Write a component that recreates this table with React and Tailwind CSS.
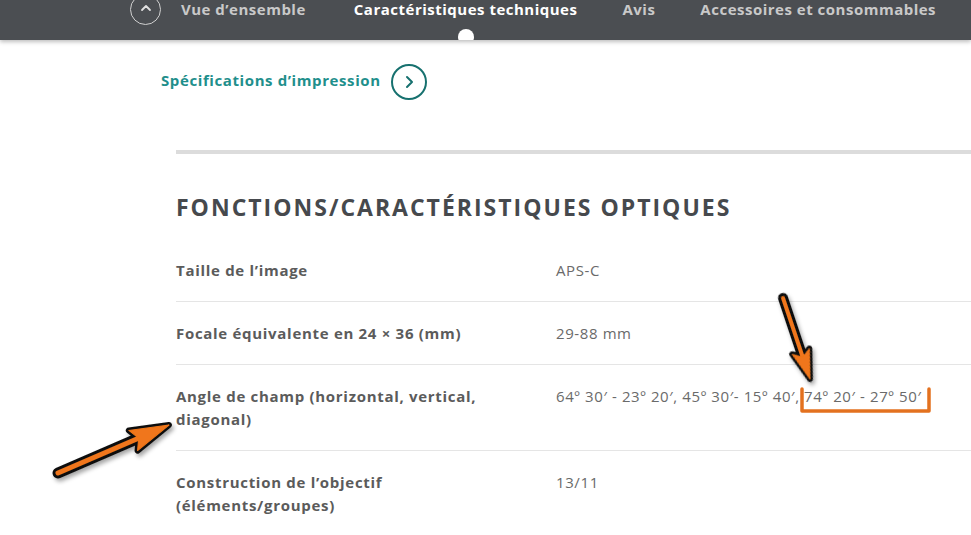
import React from "react";

function Arrow({ x1, y1, x2, y2, hl, hw, sw }) {
  const dx = x2 - x1;
  const dy = y2 - y1;
  const L = Math.hypot(dx, dy);
  const a = (Math.atan2(dy, dx) * 180) / Math.PI;
  const head = `${L - hl - 3},${-hw} ${L},0 ${L - hl - 3},${hw} ${L - hl + 3},0`;
  return (
    <g transform={`translate(${x1} ${y1}) rotate(${a})`}>
      <line x1="0" y1="0" x2={L - hl + 2} y2="0" stroke="#111" strokeWidth={sw + 6} strokeLinecap="round" />
      <polygon points={head} fill="#111" stroke="#111" strokeWidth="6" strokeLinejoin="round" />
      <line x1="0" y1="0" x2={L - hl + 4} y2="0" stroke="#f0761a" strokeWidth={sw} strokeLinecap="round" />
      <polygon points={head} fill="#f0761a" stroke="#f0761a" strokeWidth="1" strokeLinejoin="round" />
    </g>
  );
}

const rows = [
  ["Taille de l’image", "APS-C"],
  ["Focale équivalente en 24 × 36 (mm)", "29-88 mm"],
  ["Angle de champ (horizontal, vertical, diagonal)", "64º 30′ - 23º 20′, 45º 30′- 15º 40′, 74º 20′ - 27º 50′"],
  ["Construction de l’objectif (éléments/groupes)", "13/11"],
];

export default function App() {
  return (
    <div className="relative w-full h-[535px] overflow-hidden bg-white" style={{ fontFamily: '"Open Sans", "Liberation Sans", sans-serif' }}>
      <nav className="relative z-10 h-[40px] bg-[#4b4e52] overflow-hidden shadow-[0_2px_4px_rgba(0,0,0,0.25)]">
        <div className="flex items-center h-[19px] pl-[130px] text-[15px] tracking-[0.5px] font-bold text-[#c9c9c9]">
          <div className="w-[31px] h-[31px] shrink-0 rounded-full border border-[#d0d0d0] flex items-center justify-center">
            <svg width="12" height="8" viewBox="0 0 12 8" className="-mt-[3px]">
              <path d="M2 6 L6 2 L10 6" fill="none" stroke="#e0e0e0" strokeWidth="1.8" strokeLinecap="round" strokeLinejoin="round" />
            </svg>
          </div>
          <span className="ml-[20px]">Vue d’ensemble</span>
          <span className="relative ml-[48px] text-white">
            Caractéristiques techniques
            <span className="absolute left-1/2 -translate-x-1/2 top-[31px] w-[16px] h-[16px] rounded-full bg-white" />
          </span>
          <span className="ml-[45px]">Avis</span>
          <span className="ml-[45px]">Accessoires et consommables</span>
        </div>
      </nav>

      <div className="flex items-center gap-[10px] ml-[161px] mt-[24px]">
        <span className="text-[15px] tracking-[0.6px] font-bold text-[#1f8f8c] -mt-[4px]">Spécifications d’impression</span>
        <div className="w-[36px] h-[36px] rounded-full border-2 border-[#17716f] flex items-center justify-center">
          <svg width="10" height="14" viewBox="0 0 10 14">
            <path d="M3 2 L8 7 L3 12" fill="none" stroke="#17716f" strokeWidth="2" strokeLinecap="round" strokeLinejoin="round" />
          </svg>
        </div>
      </div>

      <div className="ml-[176px] mt-[50px] h-[4px] bg-[#dcdcdc]" />

      <h2 className="ml-[176px] mt-[39px] text-[23px] leading-[28px] tracking-[2px] font-bold text-[#46494d] whitespace-nowrap">
        FONCTIONS/CARACTÉRISTIQUES OPTIQUES
      </h2>

      <div className="ml-[176px] mt-[18px]">
        {rows.map(([label, value], i) => (
          <div key={i} className={`flex pt-5 pb-[19px] leading-[23px] text-[15px] ${i < rows.length - 1 ? "border-b border-[#e5e5e5]" : ""}`}>
            <div className="w-[330px] shrink-0 font-bold tracking-[0.7px] text-[#5b5b5b]">{label}</div>
            <div className="ml-[50px] tracking-[0.6px] text-[#6a6a6a] whitespace-nowrap">{value}</div>
          </div>
        ))}
      </div>

      <svg className="absolute inset-0 pointer-events-none z-20" width="971" height="535">
        <defs>
          <filter id="sh" x="-20%" y="-20%" width="140%" height="140%">
            <feDropShadow dx="2" dy="3" stdDeviation="2" floodColor="#000" floodOpacity="0.35" />
          </filter>
        </defs>
        <g filter="url(#sh)">
          <Arrow x1={58} y1={473} x2={169} y2={425} hl={36} hw={11} sw={5} />
          <Arrow x1={783} y1={298} x2={810} y2={379} hl={26} hw={9} sw={4} />
        </g>
        <path d="M802 389 V411 H929 V389" fill="none" stroke="#e3711f" strokeWidth="3.5" strokeLinecap="round" strokeLinejoin="round" />
      </svg>
    </div>
  );
}
